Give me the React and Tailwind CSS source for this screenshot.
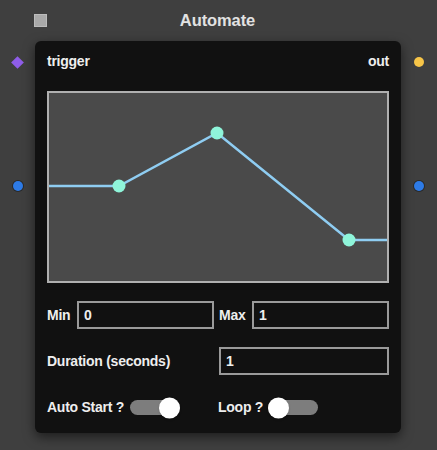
import React from 'react';

const Toggle = ({ on }) => (
    <div className="relative w-[50px] h-[15px] rounded-full bg-[#7d7d7d]">
        <div
            className={`absolute top-1/2 -translate-y-1/2 w-[21px] h-[21px] rounded-full bg-white shadow ${on ? 'right-0' : 'left-0'}`}
        />
    </div>
);

const Field = ({ value, className }) => (
    <div className={`h-[28px] border-2 border-[#9a9a9a] bg-[#111] flex items-center pl-[5px] text-[14px] ${className}`}>
        {value}
    </div>
);

const Port = ({ kind }) => {
    switch (kind) {
        case 'diamond':
            return <div className="w-[9px] h-[9px] rotate-45 bg-[#8f5de8]" />;
        case 'yellow':
            return <div className="w-[10px] h-[10px] rounded-full bg-[#f7c548]" />;
        default:
            return <div className="w-[10px] h-[10px] rounded-full bg-[#2e7be6] ring-1 ring-[#2a2a2a]" />;
    }
};

const Curve = () => {
    const pts = [[70, 93], [168, 40], [300, 147]];
    return (
        <svg width="340" height="188" className="block">
            <polyline
                points={`0,93 ${pts.map((p) => p.join(',')).join(' ')} 340,147`}
                fill="none"
                stroke="#8fcdf2"
                strokeWidth="2.5"
            />
            {pts.map(([x, y]) => (
                <circle key={x} cx={x} cy={y} r="6.5" fill="#8ff5da" />
            ))}
        </svg>
    );
};

export default function App() {
    return (
        <div
            className="w-[437px] h-[450px] bg-[#3f3f3f] text-[#eeeeee] overflow-hidden"
            style={{ fontFamily: '"Liberation Sans", Arial, sans-serif' }}
        >
            {/* header */}
            <div className="h-[41px] pl-[34px] w-[401px] grid grid-cols-[14px_1fr_14px] items-start pt-[14px]">
                <div className="w-[13px] h-[13px] bg-[#a9a9a9] border border-[#bcbcbc]" />
                <div className="text-center text-[16.5px] font-bold text-[#e2e2e2] leading-none -mt-[2px] tracking-[-0.1px]">
                    Automate
                </div>
                <div />
            </div>

            <div className="flex">
                {/* inputs */}
                <div className="w-[35px] flex flex-col items-center pt-[17px] gap-[114px]">
                    <Port kind="diamond" />
                    <Port kind="blue" />
                </div>

                {/* node body */}
                <div className="w-[366px] h-[392px] bg-[#111111] rounded-[6px] shadow-[0_4px_12px_rgba(0,0,0,0.55)] px-[12px] pt-[10px] text-[14px] font-bold tracking-[-0.25px]">
                    <div className="flex justify-between leading-[20px]">
                        <span>trigger</span>
                        <span>out</span>
                    </div>

                    <div className="mt-[20px] w-[342px] h-[192px] border-2 border-[#b0b0b0] bg-[#4a4a4a] overflow-hidden">
                        <Curve />
                    </div>

                    <div className="mt-[18px] flex items-center">
                        <span className="w-[30px]">Min</span>
                        <Field value="0" className="w-[137px]" />
                        <span className="ml-[5px] w-[33px]">Max</span>
                        <Field value="1" className="w-[137px]" />
                    </div>

                    <div className="mt-[18px] flex items-center justify-between">
                        <span>Duration (seconds)</span>
                        <Field value="1" className="w-[170px]" />
                    </div>

                    <div className="mt-[22px] flex items-center">
                        <span className="w-[83px]">Auto Start ?</span>
                        <Toggle on />
                        <span className="ml-[38px] w-[50px]">Loop ?</span>
                        <Toggle />
                    </div>
                </div>

                {/* outputs */}
                <div className="w-[36px] flex flex-col items-center pt-[16px] gap-[114px]">
                    <Port kind="yellow" />
                    <Port kind="blue" />
                </div>
            </div>
        </div>
    );
}
